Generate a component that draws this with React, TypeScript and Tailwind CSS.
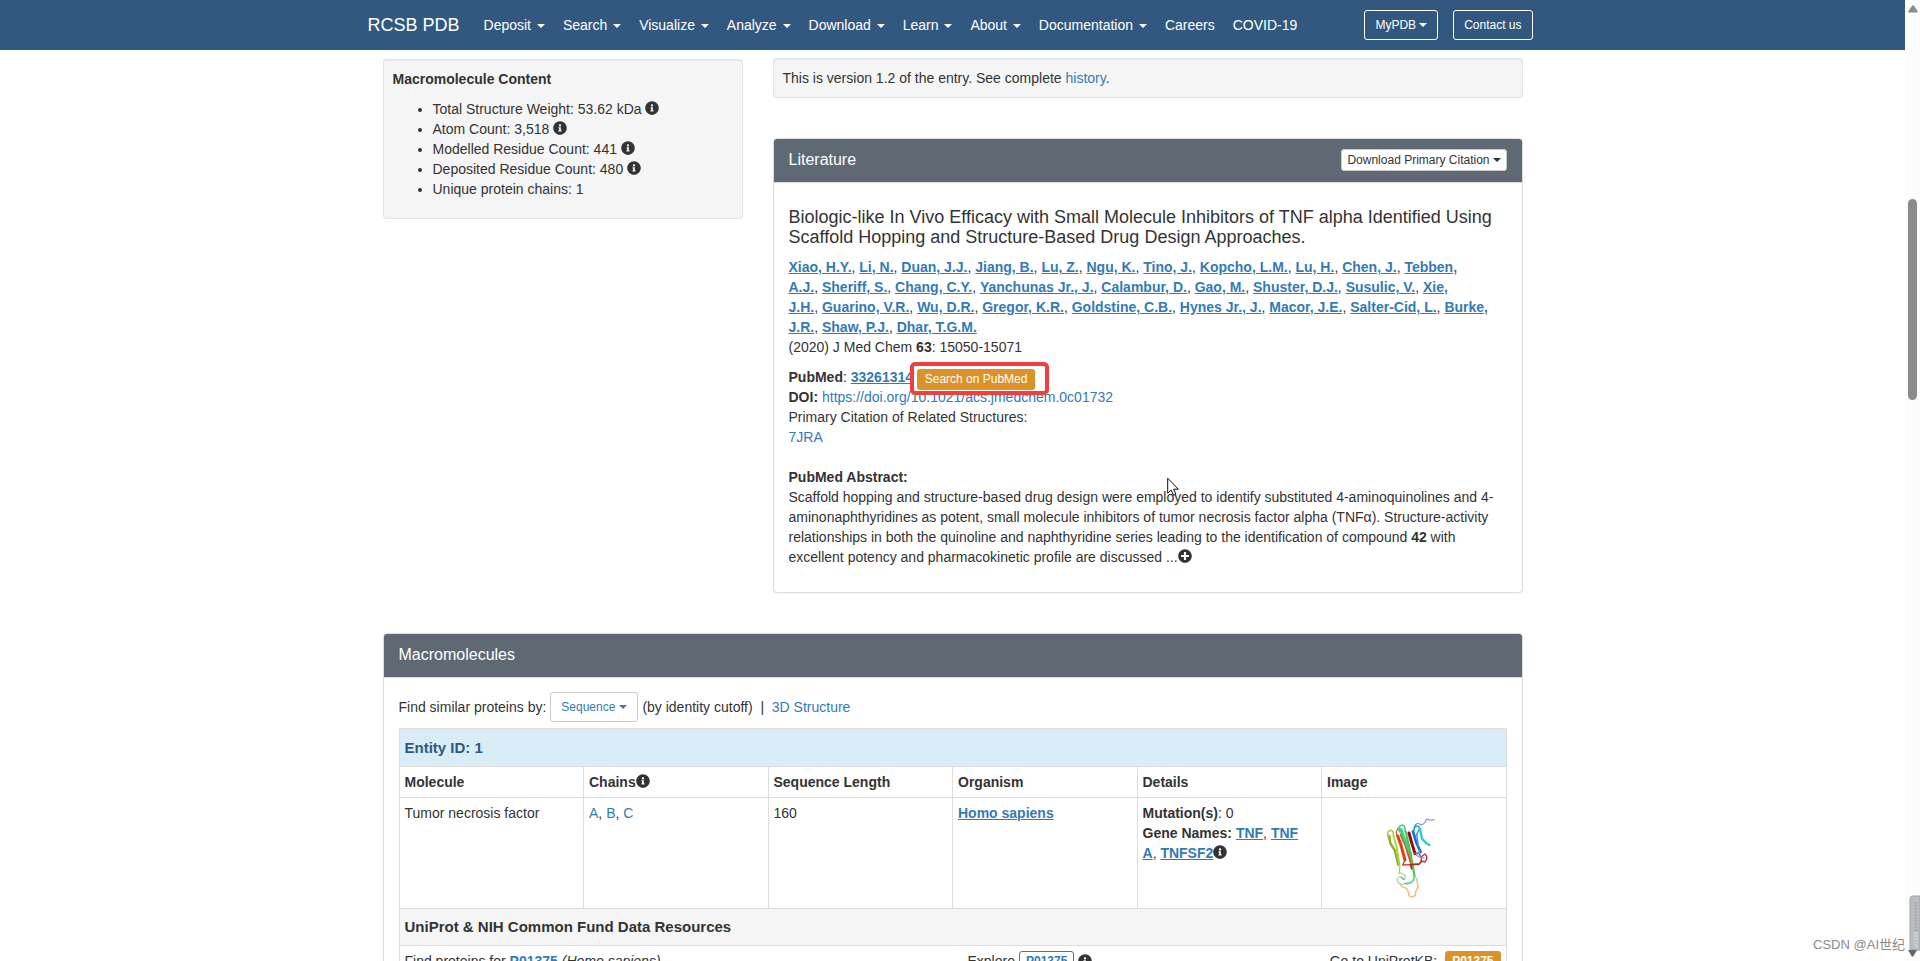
import React from "react";
import { FaInfoCircle, FaPlusCircle } from "react-icons/fa";

const menus = ["Deposit", "Search", "Visualize", "Analyze", "Download", "Learn", "About", "Documentation"];

const authors = [
  "Xiao, H.Y.", "Li, N.", "Duan, J.J.", "Jiang, B.", "Lu, Z.", "Ngu, K.", "Tino, J.", "Kopcho, L.M.",
  "Lu, H.", "Chen, J.", "Tebben, A.J.", "Sheriff, S.", "Chang, C.Y.", "Yanchunas Jr., J.", "Calambur, D.",
  "Gao, M.", "Shuster, D.J.", "Susulic, V.", "Xie, J.H.", "Guarino, V.R.", "Wu, D.R.", "Gregor, K.R.",
  "Goldstine, C.B.", "Hynes Jr., J.", "Macor, J.E.", "Salter-Cid, L.", "Burke, J.R.", "Shaw, P.J.", "Dhar, T.G.M.",
];

const content = [
  { text: "Total Structure Weight: 53.62 kDa", info: true },
  { text: "Atom Count: 3,518", info: true },
  { text: "Modelled Residue Count: 441", info: true },
  { text: "Deposited Residue Count: 480", info: true },
  { text: "Unique protein chains: 1", info: false },
];

const columns = ["Molecule", "Chains", "Sequence Length", "Organism", "Details", "Image"];

function Caret() {
  return <span className="inline-block border-x-4 border-t-4 border-x-transparent border-t-current align-middle" />;
}

function Info() {
  return <FaInfoCircle className="inline-block size-3.5 shrink-0 align-[-1px] text-[#333]" aria-hidden="true" />;
}

function A({ children, strong = false }: { children: React.ReactNode; strong?: boolean }) {
  return (
    <a href="#" className={strong ? "font-bold text-[#337ab7] underline" : "text-[#337ab7]"}>
      {children}
    </a>
  );
}

function Panel({ title, action, children }: { title: string; action?: React.ReactNode; children: React.ReactNode }) {
  return (
    <section className="rounded border border-[#ddd] bg-white shadow-[0_1px_1px_rgba(0,0,0,0.05)]">
      <header className="flex h-11 items-center justify-between rounded-t-[3px] border-b border-[#ddd] bg-[#5f6973] px-[15px] pb-0.5 text-white">
        <h3 className="text-base">{title}</h3>
        {action}
      </header>
      <div className="px-[15px] pt-3.5 pb-[15px]">{children}</div>
    </section>
  );
}

function Protein() {
  return (
    <svg viewBox="15 9 300 300" className="mx-auto block size-[100px]" fill="none" strokeLinecap="round" strokeLinejoin="round" role="img" aria-label="Tumor necrosis factor">
      <path d="M169 76c3-8 10-7 14-3 6 4 12-2 15-7 3-8 6-12 11-7 6 4 11-1 17 0" stroke="#8c9be8" strokeWidth="4" />
      <path d="M165 92l1-13 4-5" stroke="#3bb6c4" strokeWidth="4" />
      <path d="M103 104c1-14-7-14-13-11-8 3-4 12-1 22l10 25" stroke="#b9c63c" strokeWidth="5" />
      <path d="M91 108l3 22 13 20 11 45" stroke="#9aa832" strokeWidth="7" />
      <path d="M103 106l10 36 9 55" stroke="#a5dc35" strokeWidth="6" />
      <path d="M122 203l-1 18" stroke="#9bd94b" strokeWidth="4" />
      <path d="M127 100c0-13-8-19-12-11-5 6-2 15 2 20" stroke="#d4623a" strokeWidth="4" />
      <path d="M116 108l10 28 12 44" stroke="#dd3f17" strokeWidth="9" />
      <path d="M126 104l15 35 17 55" stroke="#e4571d" strokeWidth="8" />
      <path d="M137 181l-6 14 24-1" stroke="#c8402a" strokeWidth="4" />
      <path d="M121 96c-3-14 1-20 8-21 8 0 10 6 9 18" stroke="#52c98c" strokeWidth="5" />
      <path d="M126 89l16 42 13 31" stroke="#36d67d" strokeWidth="9" />
      <path d="M140 94l10 44 10 51 7 42" stroke="#43c653" strokeWidth="6" />
      <path d="M150 99l7 26 11 36" stroke="#920d10" strokeWidth="9" />
      <path d="M167 160l12-1 7 12 12-9c8 7 7 18-1 24l-11-4 2-9" stroke="#bd3339" strokeWidth="4" />
      <path d="M154 194l4 12M158 194c9-1 13-3 21-1l8-8" stroke="#b52424" strokeWidth="5" />
      <path d="M162 94l10 34 13 28" stroke="#2865d6" strokeWidth="8" />
      <path d="M181 151c-6 12-12 13-5 17 6 7 14 4 18 5" stroke="#69a9df" strokeWidth="4" />
      <path d="M164 91c3-12 12-18 18-7l-9 20 5 34" stroke="#30aacb" strokeWidth="5" />
      <path d="M183 87l6 29 13 14 9 5" stroke="#31c9cc" strokeWidth="7" />
      <path d="M122 218c8 5 15 1 17 12 1 12-12 9-13 0-12 1-14 8-10 16l12 8 17-4" stroke="#9be39a" strokeWidth="4" />
      <path d="M129 232l6 7M138 249l7 3" stroke="#77758f" strokeWidth="3" />
      <path d="M145 250c12 0 20-5 21-20" stroke="#57d58b" strokeWidth="5" />
      <path d="M124 253c4 12 10 6 18 12 8 7 4 14 10 24 6 4 14 1 17-4-2-11 4-15 8-22 1-10-5-21-3-29" stroke="#eac194" strokeWidth="5" />
    </svg>
  );
}

const cell = "border border-[#ddd] p-[5px]";

export default function App() {
  return (
    <div className="flex h-screen overflow-hidden bg-white font-['Liberation_Sans',Arial,sans-serif] text-[14px] leading-5 text-[#333]">
      <div className="min-w-0 flex-1 overflow-hidden">
        <nav className="h-[50px] bg-[#325880] text-white">
          <div className="mx-auto flex h-full max-w-[1170px] items-center whitespace-nowrap">
            <a href="#" className="mr-6 text-[18px]">RCSB PDB</a>
            <div className="flex gap-[18px]">
              {menus.map((m) => (
                <a href="#" key={m}>
                  <span className="mr-0.5">{m} </span>
                  <Caret />
                </a>
              ))}
              <a href="#">Careers</a>
              <a href="#">COVID-19</a>
            </div>
            <div className="mr-[5px] ml-auto flex gap-[15px] text-[12px] leading-[18px]">
              <button className="flex items-center gap-[3px] rounded-[3px] border border-white px-2.5 py-[5px]">
                MyPDB <Caret />
              </button>
              <button className="rounded-[3px] border border-white px-2.5 py-[5px]">Contact us</button>
            </div>
          </div>
        </nav>

        <div className="mx-auto max-w-[1140px] pt-2">
          <div className="flex items-start gap-[30px]">
            <aside className="mt-px w-[360px] shrink-0 rounded-[3px] border border-[#e3e3e3] bg-[#f5f5f5] p-[9px] shadow-[inset_0_1px_1px_rgba(0,0,0,0.05)]">
              <h4 className="font-bold">Macromolecule Content</h4>
              <ul className="my-2.5 list-disc pl-10">
                {content.map((c) => (
                  <li key={c.text}>
                    {c.text} {c.info && <Info />}
                  </li>
                ))}
              </ul>
            </aside>

            <div className="min-w-0 flex-1">
              <p className="mb-10 rounded-[3px] border border-[#e3e3e3] bg-[#f5f5f5] p-[9px] shadow-[inset_0_1px_1px_rgba(0,0,0,0.05)]">
                This is version 1.2 of the entry. See complete <A>history</A>.
              </p>

              <Panel
                title="Literature"
                action={
                  <button className="flex items-center gap-[3px] rounded-[3px] border border-[#ccc] bg-white px-[5px] py-px text-[12px] leading-[18px] text-[#333]">
                    Download Primary Citation <Caret />
                  </button>
                }
              >
                <h4 className="my-2.5 text-[18px] leading-5">
                  Biologic-like In Vivo Efficacy with Small Molecule Inhibitors of TNF alpha Identified Using Scaffold
                  Hopping and Structure-Based Drug Design Approaches.
                </h4>
                <p>
                  {authors.map((a, i) => (
                    <React.Fragment key={a}>
                      {i > 0 && ",\u00a0"}
                      <A strong>{a}</A>
                    </React.Fragment>
                  ))}
                </p>
                <p className="mb-2.5">
                  (2020) J Med Chem <b>63</b>: 15050-15071
                </p>
                <p>
                  <b>PubMed</b>:{" "}
                  <span className="relative">
                    <A strong>33261314</A>
                    <span className="absolute -top-[7px] left-[59px] flex h-[33px] w-[139px] items-start rounded-[5px] border-4 border-[#ef3f3f] bg-white pt-[3px] pl-[3px]">
                      <button className="rounded-[3px] bg-[#db9228] px-2 text-[12px] leading-[21px] whitespace-nowrap text-white">
                        Search on PubMed
                      </button>
                    </span>
                  </span>
                </p>
                <p>
                  <b>DOI:</b> <A>https://doi.org/10.1021/acs.jmedchem.0c01732</A>
                </p>
                <p>Primary Citation of Related Structures:</p>
                <p className="mb-5">
                  <A>7JRA</A>
                </p>
                <h5 className="font-bold">PubMed Abstract:</h5>
                <p className="mb-2.5">
                  Scaffold hopping and structure-based drug design were employed to identify substituted
                  4-aminoquinolines and 4-aminonaphthyridines as potent, small molecule inhibitors of tumor necrosis
                  factor alpha (TNFα). Structure-activity relationships in both the quinoline and naphthyridine series
                  leading to the identification of compound <b>42</b> with excellent potency and pharmacokinetic profile
                  are discussed ...
                  <FaPlusCircle className="inline-block size-3.5 align-[-1px]" aria-hidden="true" />
                </p>
              </Panel>
            </div>
          </div>

          <div className="mt-10">
            <Panel title="Macromolecules">
              <div className="mb-1.5 flex items-center gap-1">
                <label htmlFor="similar">Find similar proteins by:</label>
                <button id="similar" className="flex items-center gap-1 rounded-[3px] border border-[#ccc] px-2.5 py-[5px] text-[12px] leading-[18px] text-[#337ab7]">
                  Sequence <Caret />
                </button>
                <span>
                  (by identity cutoff) &nbsp;|&nbsp; <A>3D Structure</A>
                </span>
              </div>
              <table className="w-full table-fixed border-collapse border border-[#ddd] text-left align-top">
                <thead>
                  <tr className="h-[38px] bg-[#d9edf7] text-[15px] text-[#325880]">
                    <th colSpan={6} className={cell}>Entity ID: 1</th>
                  </tr>
                  <tr>
                    {columns.map((c) => (
                      <th key={c} className={cell}>
                        {c}
                        {c === "Chains" && <Info />}
                      </th>
                    ))}
                  </tr>
                </thead>
                <tbody>
                  <tr className="align-top">
                    <td className={cell}>Tumor necrosis factor</td>
                    <td className={cell}>
                      <A>A</A>, <A>B</A>, <A>C</A>
                    </td>
                    <td className={cell}>160</td>
                    <td className={cell}>
                      <A strong>Homo sapiens</A>
                    </td>
                    <td className={cell}>
                      <b>Mutation(s)</b>: 0<br />
                      <b>Gene Names: </b>
                      <A strong>TNF</A>,&nbsp;<A strong>TNF A</A>,&nbsp;<A strong>TNFSF2</A>
                      <Info />
                    </td>
                    <td className={cell}>
                      <Protein />
                    </td>
                  </tr>
                  <tr className="h-[37px] bg-[#f5f5f5] text-[15px]">
                    <th colSpan={6} className={cell}>UniProt &amp; NIH Common Fund Data Resources</th>
                  </tr>
                  <tr>
                    <td colSpan={6} className={cell}>
                      <div className="grid grid-cols-2 items-center">
                        <span>
                          Find proteins for <A strong>P01375</A> <i>(Homo sapiens)</i>
                        </span>
                        <div className="flex items-center justify-between pl-[15px]">
                          <span className="flex items-center gap-1">
                            Explore
                            <button className="rounded-[3px] border border-[#337ab7] px-1.5 text-[12px] leading-[18px] font-bold text-[#337ab7]">
                              P01375
                            </button>
                            <Info />
                          </span>
                          <span className="flex items-center gap-2">
                            Go to UniProtKB:
                            <button className="rounded-[3px] bg-[#db9228] px-[7px] text-[12px] leading-5 font-bold text-white">
                              P01375
                            </button>
                          </span>
                        </div>
                      </div>
                    </td>
                  </tr>
                </tbody>
              </table>
            </Panel>
          </div>
        </div>
      </div>

      <div className="flex w-[15px] shrink-0 flex-col items-center bg-[#fcfcfc] pt-[5px]" aria-hidden="true">
        <svg viewBox="0 0 10 8" className="h-2 w-2.5 fill-[#8b8b8b]">
          <path d="M4 .8Q5-.4 6 .8L9.8 6.500Q10 7.500 9 7.500H1Q0 7.500.2 6.500Z" />
        </svg>
        <span className="mt-[186px] h-[201px] w-[9px] rounded-full bg-[#8b8b8b]" />
      </div>

      <svg viewBox="0 0 12 19" className="absolute top-[477px] left-[1167px] h-[19px] w-3" aria-hidden="true">
        <path d="M.7 1.200V16.200L4.200 13L6.500 18.200L8.900 17.200L6.700 12.200H11.300Z" fill="#fff" stroke="#111" strokeWidth="1" />
      </svg>

      <span className="absolute right-[15px] bottom-1.5 font-['Liberation_Sans','Noto_Sans_CJK_SC',sans-serif] text-[13px] text-[#8a8a8a]">
        CSDN @AI世纪
      </span>
      <svg viewBox="0 0 12 62" className="absolute right-0 bottom-1 h-[62px] w-3" aria-hidden="true">
        <path d="M12 1H5Q2 1 2 4V55H12Z" fill="#b9bcc3" stroke="#a3a5ab" />
        <path d="M6 8H10M6 11H10M6 14H10M6 17H10M6 20H10M6 23H10M6 26H10M6 29H10M6 32H10M6 35H10" stroke="#a1a4aa" />
        <path d="M6 38H10M6 41H10M6 44H10" stroke="#d9ecc9" />
        <path d="M6 47H10M6 50H10M6 52H10" stroke="#bde5dc" />
        <path d="M0 55H9L5.500 61Q4.500 62 3.500 61Z" fill="#66676b" />
      </svg>
    </div>
  );
}
